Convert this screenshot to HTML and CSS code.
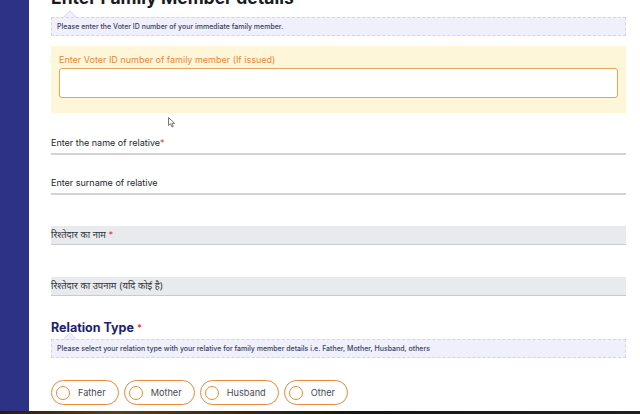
FILE: index.html
```html
<!DOCTYPE html>
<html lang="en">
<head>
<meta charset="utf-8">
<title>Enter Family Member details</title>
<link rel="stylesheet" href="styles.css">
</head>
<body>
<div class="screen">
  <aside class="sidebar"></aside>
  <main class="content">
    <h1 class="title">Enter Family Member details</h1>
    <div class="hint hint-arrow">Please enter the Voter ID number of your immediate family member.</div>
    <div class="voter-box">
      <div class="voter-label">Enter Voter ID number of family member (If issued)</div>
      <div class="voter-input"></div>
    </div>
    <div class="line-field first">Enter the name of relative<span class="req">*</span></div>
    <div class="line-field">Enter surname of relative</div>
    <div class="gray-field first">रिश्तेदार का नाम <span class="req">*</span></div>
    <div class="gray-field">रिश्तेदार का उपनाम (यदि कोई है)</div>
    <h2 class="section-title">Relation Type <span class="req">*</span></h2>
    <div class="hint hint-arrow-2">Please select your relation type with your relative for family member details i.e. Father, Mother, Husband, others</div>
    <div class="radios">
      <div class="pill"><span class="dot"></span>Father</div>
      <div class="pill"><span class="dot"></span>Mother</div>
      <div class="pill"><span class="dot"></span>Husband</div>
      <div class="pill"><span class="dot"></span>Other</div>
    </div>
    <svg class="cursor" width="8" height="11" viewBox="0 0 8 11"><path d="M0.5 0.5 L0.5 8.5 L2.5 6.8 L4 10 L5.3 9.4 L3.9 6.3 L6.6 6.3 Z" fill="#fff" stroke="#555" stroke-width="0.8" stroke-linejoin="round"/></svg>
  </main>
</div>
<div class="taskbar"></div>
</body>
</html>
```

FILE: styles.css
```css
* { box-sizing: border-box; }
html, body { margin: 0; padding: 0; }
body {
  width: 640px;
  height: 414px;
  overflow: hidden;
  font-family: Inter, "Noto Sans", "Noto Sans Devanagari", sans-serif;
  background: #fff;
}
.screen {
  display: flex;
  height: 411px;
  overflow: hidden;
}
.sidebar {
  width: 29px;
  flex: 0 0 29px;
  background: #2e3287;
}
.content {
  flex: 1;
  position: relative;
  padding: 0 14px 0 22px;
  display: flex;
  flex-direction: column;
  background: #fff;
}
.title {
  margin: -13px 0 0;
  font-size: 17.5px;
  line-height: 22px;
  font-weight: 700;
  color: #1b1b1f;
}
.hint {
  position: relative;
  height: 19px;
  background: #eff0fc;
  border: 1px dashed #d2d5e9;
  font-size: 7px;
  line-height: 17px;
  padding-left: 5px;
  color: #3b3e5c;
  font-weight: 500;
  white-space: nowrap;
}
.hint-arrow { margin-top: 8px; }
.hint-arrow::before, .hint-arrow-2::before {
  content: "";
  position: absolute;
  left: 13px;
  top: -6px;
  width: 9px;
  height: 9px;
  background: #eff0fc;
  border-left: 1px solid #d8dbec;
  border-top: 1px solid #d8dbec;
  transform: rotate(45deg);
  transform-origin: center;
  clip-path: polygon(0 0, 100% 0, 0 100%);
}
.hint-arrow-2 { margin-top: 3px; }
.voter-box {
  margin-top: 10px;
  background: #fdf6d9;
  padding: 8px 8px 15px;
}
.voter-label {
  font-size: 9px;
  line-height: 12px;
  color: #e8873b;
  margin-bottom: 2px;
}
.voter-input {
  height: 30px;
  background: #fff;
  border: 1.5px solid #e2a55e;
  border-radius: 3px;
}
.line-field {
  margin-top: 21px;
  font-size: 9px;
  line-height: 14px;
  color: #26262b;
  padding-bottom: 3px;
  border-bottom: 2px solid #d3d3d5;
}
.line-field.first { margin-top: 23px; }
.req { color: #e43b3b; }
.gray-field {
  margin-top: 32px;
  height: 19px;
  background: #e8eaed;
  border-bottom: 1.5px solid #c9cbce;
  font-size: 9.4px;
  line-height: 17px;
  color: #33343a;
}
.gray-field.first { margin-top: 31px; }
.section-title {
  margin: 24px 0 0;
  font-size: 12.5px;
  line-height: 16px;
  font-weight: 700;
  color: #1d2270;
}
.section-title .req { font-size: 9px; vertical-align: 1px; }
.radios {
  margin-top: 22px;
  display: flex;
  gap: 5px;
}
.pill {
  height: 25px;
  display: flex;
  align-items: center;
  padding: 0 12px 0 4px;
  border: 1.5px solid #e8893c;
  border-radius: 13px;
  font-size: 9.2px;
  color: #4a4a50;
}
.dot {
  width: 14px;
  height: 14px;
  border: 1.5px solid #e8893c;
  border-radius: 50%;
  margin-right: 8px;
  background: #fff;
}
.cursor {
  position: absolute;
  left: 139px;
  top: 117px;
}
.taskbar {
  height: 3px;
  background: linear-gradient(to right, #2a1c12 0%, #5a3d1c 18%, #3a2a18 35%, #151515 55%, #202020 100%);
}
```
